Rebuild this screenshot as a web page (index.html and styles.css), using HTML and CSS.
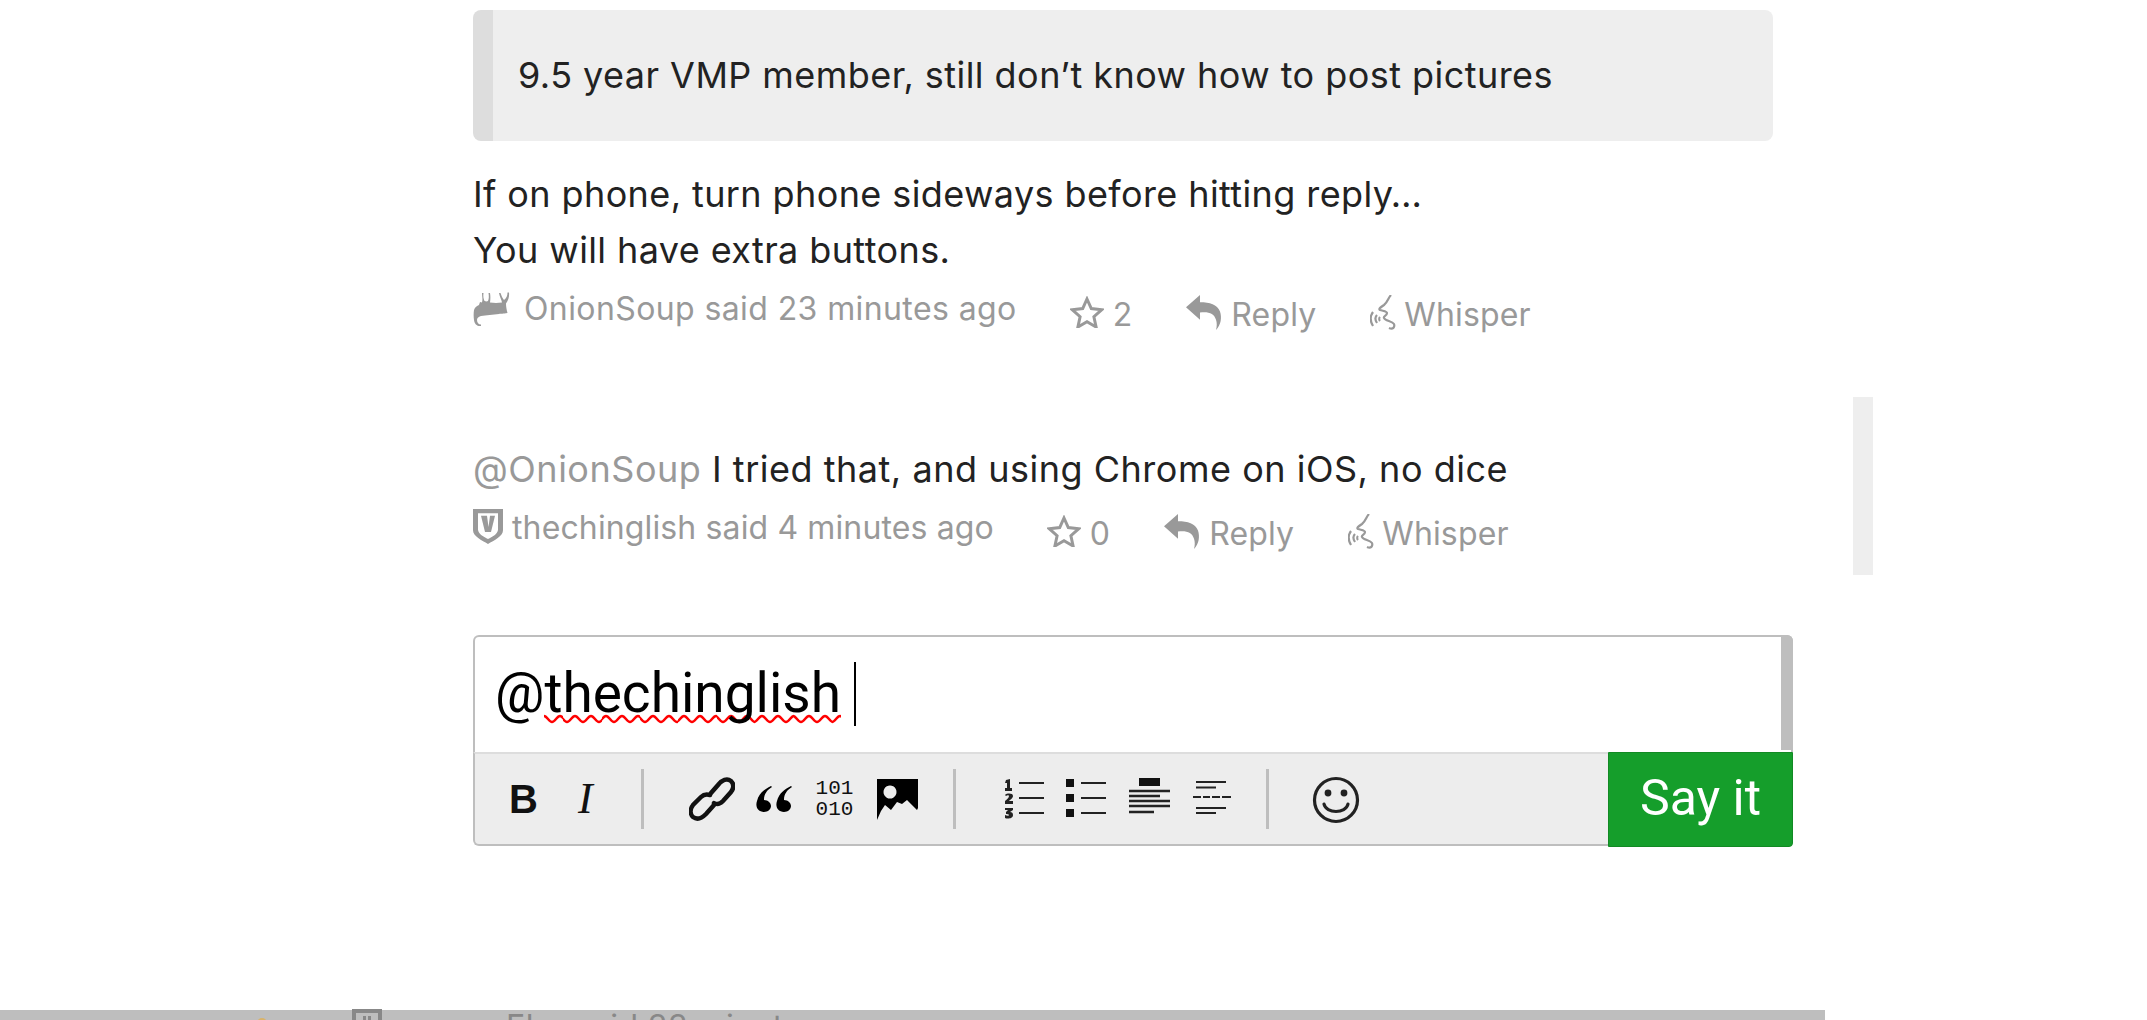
FILE: index.html
```html
<!DOCTYPE html>
<html lang="en">
<head>
<meta charset="utf-8">
<title>Comment thread</title>
<link rel="stylesheet" href="styles.css">
</head>
<body>
<div class="page">
  <div class="scroll-strip"></div>
  <main class="thread">
    <blockquote class="quote">9.5 year VMP member, still don’t know how to post pictures</blockquote>
    <p class="body first">If on phone, turn phone sideways before hitting reply…<br>You will have extra buttons.</p>
    <div class="meta meta-one">
      <svg class="avatar bull" viewBox="0 0 41 36"><path d="M9 2h1.500c-.5 3 0 6 1 8l2 .5 1.500-.5c1-2 1-5 .5-8H17c.5 3 .5 6 0 9.500 4 .5 8 .5 12 0-.5-3-2.500-6-3-9.500h1.500c1 3 2 5 3.500 7 2.500-2 3.500-4 3.500-7.500H36c.5 5-1 8-3 11 0 3 .5 6 1.500 9.500C30 23 28 22.500 26 23 20 24 13 24 8 25c-3 1-4 2-4 4 0 2.500 1.500 4.500 4 4.500V35c-4 .5-6.500-2-7-6-.5-3-.5-7 0-10 1-3 3-4 5-5l1-3 2 .5c1-3.500 0-5.500 0-9.500z"/></svg>
      <span class="author">OnionSoup said 23 minutes ago</span>
      <span class="action gap-star"><svg class="ico star" viewBox="0 0 34 32"><path d="M17 3l4.300 9.600 10.500 1.100-7.900 7 2.200 10.300-9.100-5.300-9.100 5.300 2.200-10.300-7.900-7 10.500-1.100z"/></svg>2</span>
      <span class="action gap-reply"><svg class="ico reply" viewBox="0 0 36 34" preserveAspectRatio="none"><path d="M14 0L0 12l14 12v-7c9-1 14 1 16 7 1 3 1 6 0 10 5-5 6-12 4-18-3-7-10-9-20-9z"/></svg>Reply</span>
      <span class="action gap-whisper"><svg class="ico whisper" viewBox="0 0 26 36"><path d="M21 0C18 3 18 7 14 10 11 12 8 14 10 15c3 1 7 1 7 3 0 3-4 3-3 5 1 3 8 3 10 6 1 3-1 6-5 4M3 17C0 21 0 26 3 31M7 20c-2 2-2 5 0 8M10 22c-1 1-1 3 0 4"/></svg>Whisper</span>
    </div>
    <p class="body second"><span class="mention">@OnionSoup</span> I tried that, and using Chrome on iOS, no dice</p>
    <div class="meta meta-two">
      <svg class="avatar shield" viewBox="0 0 30 41" preserveAspectRatio="none"><path fill-rule="evenodd" d="M0 0h30v25c0 7-9 12-15 16C9 37 0 32 0 25zM5 5v19c0 5 6 9 10 11 4-2 10-6 10-11V5zM8 8h6l1.500 13L17 8h5l-4 19h-6z"/></svg>
      <span class="author">thechinglish said 4 minutes ago</span>
      <span class="action gap-star"><svg class="ico star" viewBox="0 0 34 32"><path d="M17 3l4.300 9.600 10.500 1.100-7.900 7 2.200 10.300-9.100-5.300-9.100 5.300 2.200-10.300-7.900-7 10.500-1.100z"/></svg>0</span>
      <span class="action gap-reply"><svg class="ico reply" viewBox="0 0 36 34" preserveAspectRatio="none"><path d="M14 0L0 12l14 12v-7c9-1 14 1 16 7 1 3 1 6 0 10 5-5 6-12 4-18-3-7-10-9-20-9z"/></svg>Reply</span>
      <span class="action gap-whisper"><svg class="ico whisper" viewBox="0 0 26 36"><path d="M21 0C18 3 18 7 14 10 11 12 8 14 10 15c3 1 7 1 7 3 0 3-4 3-3 5 1 3 8 3 10 6 1 3-1 6-5 4M3 17C0 21 0 26 3 31M7 20c-2 2-2 5 0 8M10 22c-1 1-1 3 0 4"/></svg>Whisper</span>
    </div>
    <section class="editor">
      <div class="input">
        <div class="input-text"><span>@<span class="misspelt">thechinglish</span></span><span class="caret"></span></div>
        <div class="input-scroll"></div>
      </div>
      <div class="toolbar">
        <div class="tools">
          <span class="tool t-b">B</span>
          <span class="tool t-i">I</span>
          <i class="sep sep-1"></i>
          <svg class="tool-svg link" viewBox="0 0 46 46"><g fill="none" stroke="#111" stroke-width="4.500" stroke-linecap="round"><path d="M22 17l7-8c4-5 9-7 13-4 3 3 3 7 0 11l-8 9c-3 3-6 4-9 2"/><path d="M25 29l-8 9c-4 4-9 6-13 3-3-3-3-8 0-12l8-8c3-3 6-3 9-2"/></g></svg>
          <svg class="tool-svg quote-ico" viewBox="0 0 36 28"><path d="M15 1C9 4 3 8 1 16c-2 6 1 11 7 11 4 0 7-3 7-6s-3-6-7-6c0-6 3-10 8-13zM35 1c-6 3-12 7-14 15-2 6 1 11 7 11 4 0 7-3 7-6s-3-6-7-6c0-6 3-10 8-13z"/></svg>
          <span class="tool t-code">101<br>010</span>
          <svg class="tool-svg image" viewBox="0 0 41 41"><path fill-rule="evenodd" d="M0 0h41v29l-1 2-10-10-5 4-5-2-6 8-6-5-4 6-4 9zM13 6.500a6.500 6.500 0 1 0 .01 0z"/></svg>
          <i class="sep sep-2"></i>
          <svg class="tool-svg ol" viewBox="0 0 41 42"><g stroke="#222" stroke-width="2.200"><path d="M15 5h25M15 20h25M15 35h25"/></g><path d="M2 2l4-1v9h2v3H1v-3h2V5H1zM1 17c2-2 8-2 8 1 0 2-3 4-4 5h4v3H1v-3c2-2 4-3 4-5 0-1-2-1-3 0zM1 30h8v2l-3 2c2 0 3 1 3 3 0 4-6 4-8 3v-3c2 1 4 1 4 0s-2-1-3-1v-2l2-2H1z" fill="#222"/></svg>
          <svg class="tool-svg ul" viewBox="0 0 41 42"><g stroke="#222" stroke-width="2.200"><path d="M15 5h25M15 20h25M15 35h25"/></g><path d="M0 1h8v8H0zM0 16h8v8H0zM0 31h8v8H0z" fill="#111"/></svg>
          <svg class="tool-svg heading" viewBox="0 0 41 42"><path d="M10 0h21v8H10z" fill="#111"/><g stroke="#222" stroke-width="2.600"><path d="M0 13h41M0 18h31M0 23h41M0 28h41M0 34h25"/></g></svg>
          <svg class="tool-svg hr" viewBox="0 0 38 42"><g stroke="#222" stroke-width="2.200"><path d="M3 4h30M3 9.500h20M0 19h38M3 30h30M3 35h20"/></g><path d="M8 17h2v4H8zM17 17h2v4h-2zM27 17h2v4h-2z" fill="#ededed"/></svg>
          <i class="sep sep-3"></i>
          <svg class="tool-svg smile" viewBox="0 0 48 48"><circle cx="24" cy="24" r="21.500" fill="none" stroke="#222" stroke-width="3.200"/><circle cx="16" cy="17" r="3.400" fill="#222"/><circle cx="32" cy="17" r="3.400" fill="#222"/><path d="M12 28c2 10 22 10 24 0" fill="none" stroke="#222" stroke-width="3.200" stroke-linecap="round"/></svg>
        </div>
        <button class="say-it">Say it</button>
      </div>
    </section>
  </main>
  <footer class="next-bar">
    <span class="dot"></span>
    <svg class="bar-ico" viewBox="0 0 30 30"><path fill-rule="evenodd" d="M0 0h30v30H0zM4 4v22h22V4zM11 7h3v4h-3zM16 7h3v4h-3z"/></svg>
    <span class="bar-text">Ebo said 33 minutes ago</span>
  </footer>
</div>
</body>
</html>
```
FILE: styles.css
```css
* { box-sizing: border-box; }
html, body { margin: 0; padding: 0; background: #fff; }
.page {
  position: relative;
  width: 2147px;
  height: 1020px;
  overflow: hidden;
  font-family: Inter, Lato, sans-serif;
  color: #222;
}
.scroll-strip {
  position: absolute;
  left: 1853px;
  top: 397px;
  width: 20px;
  height: 178px;
  background: #eee;
}
.thread {
  width: 1320px;
  margin-left: 473px;
  padding-top: 10px;
}
.quote {
  display: flex;
  align-items: center;
  width: 1300px;
  height: 131px;
  margin: 0;
  padding-left: 25px;
  padding-bottom: 1px;
  background: #eee;
  border-left: 20px solid #ddd;
  border-radius: 8px;
  font-size: 36px;
  letter-spacing: 0.45px;
}
.body {
  margin: 0;
  font-size: 36px;
  letter-spacing: 0.4px;
  line-height: 56px;
}
.first { margin-top: 25px; }
.second { margin-top: 94px; letter-spacing: 0.52px; }
.mention { color: #999; }
.meta {
  display: flex;
  align-items: flex-start;
  height: 60px;
  margin-top: 9px;
  color: #999;
  font-size: 32px;
  letter-spacing: 0.4px;
  line-height: 44px;
}
.author { white-space: nowrap; }
.meta-two .author { letter-spacing: 0.13px; }
.action { display: flex; align-items: flex-start; margin-top: 6px; letter-spacing: 0.15px; }
.avatar { fill: #999; flex: none; }
.bull { width: 41px; height: 36px; margin: 4px 10px 0 0; }
.shield { width: 30px; height: 35px; margin: 3px 9px 0 0; }
.ico { flex: none; }
.star { width: 34px; height: 32px; margin: 3px 9px 0 0; fill: none; stroke: #999; stroke-width: 3; }
.reply { width: 36px; height: 35px; margin: 2px 9px 0 0; fill: #999; }
.whisper { width: 26px; height: 36px; margin: 2px 8px 0 0; fill: none; stroke: #999; stroke-width: 2.200; }
.gap-star { margin-left: 53px; }
.gap-reply { margin-left: 54px; }
.gap-whisper { margin-left: 54px; }
.editor {
  width: 1320px;
  margin-top: 69px;
  height: 212px;
}
.input {
  position: relative;
  height: 117px;
  border: 2px solid #bebebe;
  border-bottom: 0;
  border-radius: 6px 6px 0 0;
  background: #fff;
}
.input-text {
  display: flex;
  align-items: flex-start;
  padding: 24px 0 0 20px;
  font-family: Roboto, sans-serif;
  font-size: 55px;
  line-height: 64px;
  color: #000;
}
.misspelt {
  padding-bottom: 2px;
  background: url("data:image/svg+xml,%3Csvg xmlns='http://www.w3.org/2000/svg' width='15.600' height='10'%3E%3Cpath d='M0 2C3 2 4.800 8 7.800 8S12.600 2 15.600 2' fill='none' stroke='%23f00' stroke-width='2.400'/%3E%3C/svg%3E") repeat-x 0 53px / 15.600px 10px;
}
.caret { width: 2px; height: 64px; margin: 1px 0 0 13px; background: #000; }
.input-scroll {
  position: absolute;
  right: -2px;
  top: -2px;
  bottom: 2px;
  width: 12px;
  background: #bebebe;
  border-radius: 0 6px 0 0;
}
.toolbar {
  display: flex;
  height: 95px;
}
.tools {
  flex: 1;
  display: flex;
  align-items: center;
  height: 94px;
  background: #ededed;
  border: 2px solid #bebebe;
  border-top: 2px solid #ddd;
  border-right: 0;
  border-radius: 0 0 0 6px;
}
.tool, .tool-svg { display: block; flex: none; color: #111; }
.t-b { font: 700 40px/1 "Liberation Sans", sans-serif; margin-left: 34px; }
.t-i { font: italic 400 44px/1 "Liberation Serif", serif; margin-left: 40px; }
.t-code { font: 400 21px/21px "Liberation Mono", monospace; text-align: center; margin-left: 24px; }
.sep { display: block; flex: none; width: 3px; height: 60px; background: #bebebe; }
.sep-1 { margin-left: 48px; }
.sep-2 { margin-left: 35px; }
.sep-3 { margin-left: 35px; }
.link { width: 46px; height: 46px; margin-left: 45px; }
.quote-ico { width: 36px; height: 28px; margin-left: 21px; }
.image { width: 41px; height: 41px; margin-left: 24px; }
.ol { width: 41px; height: 42px; margin-left: 48px; }
.ul { width: 41px; height: 42px; margin-left: 21px; }
.heading { width: 41px; height: 42px; margin-left: 22px; }
.hr { width: 38px; height: 42px; margin-left: 23px; }
.smile { width: 48px; height: 48px; margin: 2px 0 0 43px; }
.say-it {
  flex: none;
  width: 185px;
  height: 95px;
  padding: 0 0 4px;
  border: 1px solid #128a24;
  border-radius: 0 0 4px 0;
  background: #159e2b;
  color: #fff;
  font: 400 50px/1 Roboto, sans-serif;
}
.next-bar {
  position: absolute;
  left: 0;
  top: 1010px;
  width: 1825px;
  height: 10px;
  background: #bebebe;
}
.dot { position: absolute; left: 257px; top: 8px; width: 10px; height: 10px; border-radius: 50%; background: #d9b36a; }
.bar-ico { position: absolute; left: 352px; top: -1px; width: 30px; height: 30px; fill: #888; }
.bar-text { position: absolute; left: 506px; top: -3px; font-size: 32px; letter-spacing: 0.4px; line-height: 40px; color: #888; white-space: nowrap; }
```
